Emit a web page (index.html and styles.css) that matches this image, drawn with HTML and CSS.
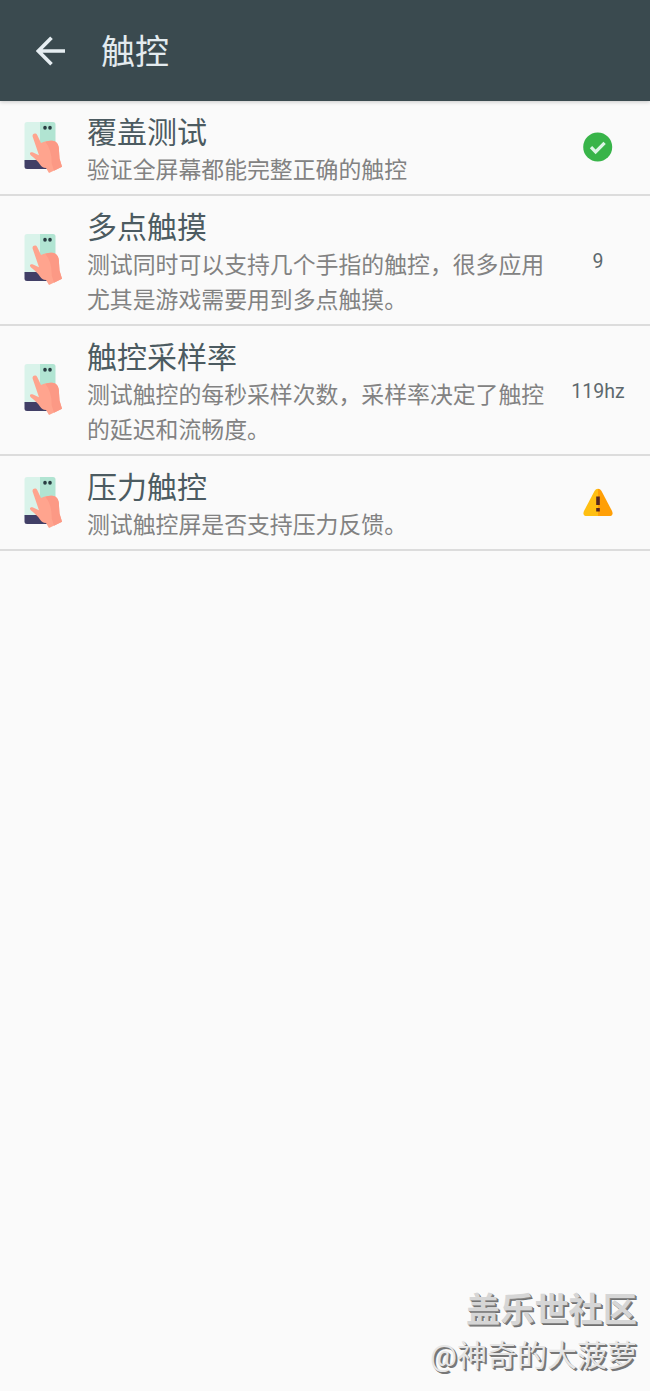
FILE: index.html
```html
<!DOCTYPE html>
<html lang="zh-CN">
<head>
<meta charset="utf-8">
<title>触控</title>
<link rel="stylesheet" href="styles.css">
</head>
<body>
<svg class="defs" width="0" height="0" aria-hidden="true">
  <defs>
    <symbol id="touch" viewBox="0 0 40 52">
      <path fill="#d9f3ea" d="M3 1h14v40H.5V3.500Q.5 1 3 1z"/>
      <path fill="#b1e4d2" d="M16 1h13q2.500 0 2.500 2.500V41H16z"/>
      <path fill="#413f66" d="M.5 39h30v9H3Q.5 48 .5 45.500z"/>
      <ellipse cx="21" cy="6.800" rx="1.800" ry="2" fill="#293d42"/>
      <ellipse cx="26" cy="6.800" rx="1.800" ry="2" fill="#293d42"/>
      <path fill="#ffa48e" d="M8.600 15.500C8 12.300 12 11.500 13.200 14L17 22c4-1.700 7-2.400 11-2.200 4 .2 6.300 3 6.800 7L35.500 37.500l2.500 8.300L25 52l-3-5c-3-.3-4.500-1.200-6-3.600-2.500-3.500-4.500-5.200-8-8.200C4.500 33 6 30.500 9 31.500l6 2.800z"/>
      <path fill="#fc9985" d="M21.500 21Q25 19.500 28 19.800c4 .2 6.300 3 6.800 7L35.500 37.500l2.500 8.300-8 3.900-2.300-7.200Q28 29 21.500 21z"/>
    </symbol>
  </defs>
</svg>
<header class="app-bar">
  <svg class="back" viewBox="0 0 30 30"><path d="M29 15H3M15.500 1.800L2.300 15l13.200 13.200"/></svg>
  <h1 class="app-title">触控</h1>
</header>
<main class="list">
  <section class="row">
    <svg class="touch"><use href="#touch"/></svg>
    <div class="copy"><h2 class="title">覆盖测试</h2><p class="desc">验证全屏幕都能完整正确的触控</p></div>
    <div class="status"><svg class="badge" viewBox="0 0 30 30"><circle cx="14.700" cy="15" r="14.500" fill="#38b449"/><path d="M8 15.200l4.600 4.600 9-9" fill="none" stroke="#dcf5e6" stroke-width="3.300"/></svg></div>
  </section>
  <section class="row">
    <svg class="touch"><use href="#touch"/></svg>
    <div class="copy"><h2 class="title">多点触摸</h2><p class="desc">测试同时可以支持几个手指的触控，很多应用<br>尤其是游戏需要用到多点触摸。</p></div>
    <div class="status value">9</div>
  </section>
  <section class="row">
    <svg class="touch"><use href="#touch"/></svg>
    <div class="copy"><h2 class="title">触控采样率</h2><p class="desc">测试触控的每秒采样次数，采样率决定了触控<br>的延迟和流畅度。</p></div>
    <div class="status value">119hz</div>
  </section>
  <section class="row">
    <svg class="touch"><use href="#touch"/></svg>
    <div class="copy"><h2 class="title">压力触控</h2><p class="desc">测试触控屏是否支持压力反馈。</p></div>
    <div class="status"><svg class="badge" viewBox="0 0 30 30"><path fill="#ffbf12" d="M15 1.700q-2.200 0-3.500 2.200L1 24Q-1 29 4 29h11z"/><path fill="#ff9f06" d="M15 1.700q2.200 0 3.500 2.200L29 24q2 5-3 5H15z"/><path fill="#542621" d="M13.200 9.500h3.600v8.500h-3.600zM13.200 21h3.600v3.500h-3.600z"/></svg></div>
  </section>
</main>
<footer class="watermark"><div class="community">盖乐世社区</div><div class="author">@神奇的大菠萝</div></footer>
</body>
</html>
```
FILE: styles.css
```css
* { box-sizing: border-box; }
body {
  margin: 0;
  min-height: 1391px;
  display: flex;
  flex-direction: column;
  background: #fafafa;
  font-family: Roboto, "Noto Sans CJK SC", sans-serif;
}
h1, h2, p { margin: 0; font-weight: 400; }
.defs { position: absolute; }
.app-bar {
  display: flex;
  align-items: center;
  height: 101px;
  padding-left: 36px;
  background: #3a4a4f;
  box-shadow: 0 1px 4px rgba(0, 0, 0, .2);
}
.back { width: 30px; height: 30px; fill: none; stroke: #e6eef2; stroke-width: 3.7; }
.app-title { margin: 2px 0 0 35px; font-size: 34px; line-height: 50px; color: #e3ebef; }
.row {
  display: flex;
  align-items: center;
  padding: 12px 0 6px 24px;
  border-bottom: 2px solid #dcdcdc;
}
.touch { width: 40px; height: 52px; flex: none; margin-top: -8px; }
.copy { width: 481px; margin-left: 23px; flex: none; }
.title { font-size: 30px; line-height: 40px; color: #4c5b61; }
.desc { font-size: 22.86px; line-height: 35px; color: #828282; white-space: nowrap; }
.status {
  display: flex;
  justify-content: center;
  width: 60px;
  margin-top: -7px;
}
.value { margin-top: -3px; font-size: 19.5px; line-height: 24px; color: #5d686d; }
.badge { width: 30px; height: 30px; }
.watermark { margin-top: auto; padding: 0 13px 12px; text-align: right; }
.community { font-size: 34.2px; line-height: 46px; font-weight: 700; color: #d6d6d6; text-shadow: 1px 1px #858585, 2px 2px #707070; }
.author { font-size: 30px; line-height: 46px; color: #e6e6e6; text-shadow: 1px 1px #777, 2px 2px #777; }
```
